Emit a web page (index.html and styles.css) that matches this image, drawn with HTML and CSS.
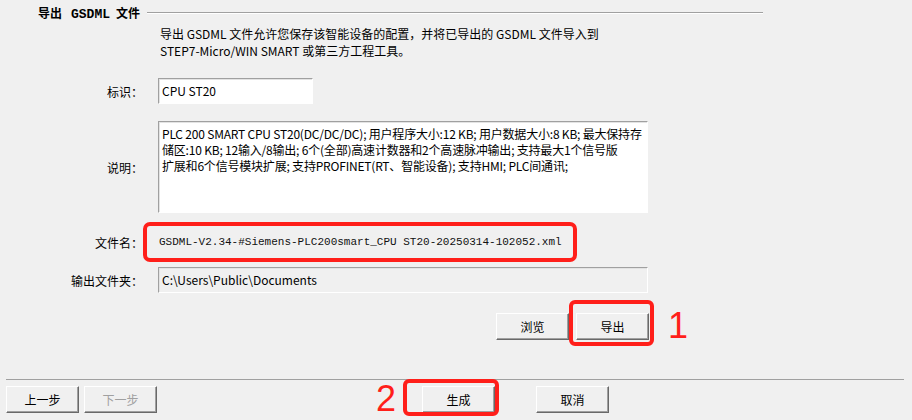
FILE: index.html
```html
<!DOCTYPE html>
<html lang="zh-CN">
<head>
    <meta charset="UTF-8">
    <title>导出 GSDML 文件</title>
    <link rel="stylesheet" href="styles.css">
</head>
<body>
    <div class="dialog">
        <div class="group-title">
            <span class="group-text">导出<b class="mono">GSDML</b>文件</span>
            <span class="group-line"></span>
        </div>
        <p class="intro">导出 GSDML 文件允许您保存该智能设备的配置，并将已导出的 GSDML 文件导入到<br>STEP7-Micro/WIN SMART 或第三方工程工具。</p>

        <div class="form">
            <label class="label row-id">标识：</label>
            <div class="field row-id"><div class="input id-input">CPU ST20</div></div>

            <label class="label row-desc">说明：</label>
            <div class="field row-desc"><div class="input textarea">PLC 200 SMART CPU ST20(DC/DC/DC); 用户程序大小:12 KB; 用户数据大小:8 KB; 最大保持存<br>储区:10 KB; 12输入/8输出; 6个(全部)高速计数器和2个高速脉冲输出; 支持最大1个信号版<br>扩展和6个信号模块扩展; 支持PROFINET(RT、智能设备); 支持HMI; PLC间通讯;</div></div>

            <label class="label row-file">文件名：</label>
            <div class="field row-file"><div class="file-name">GSDML-V2.34-#Siemens-PLC200smart_CPU ST20-20250314-102052.xml</div></div>

            <label class="label row-dir">输出文件夹：</label>
            <div class="field row-dir"><div class="input disabled">C:\Users\Public\Documents</div></div>
        </div>

        <div class="actions">
            <button class="btn">浏览</button>
            <span class="marked mark-export"><button class="btn">导出</button></span>
            <span class="step-no">1</span>
        </div>

        <div class="footer">
            <button class="btn">上一步</button>
            <button class="btn" disabled>下一步</button>
            <span class="marked mark-generate"><span class="step-no step-two">2</span><button class="btn">生成</button></span>
            <button class="btn btn-cancel">取消</button>
        </div>
    </div>
</body>
</html>
```

FILE: styles.css
```css
body {
    margin: 0;
    background: #f0f0f0;
    font-family: "Noto Sans CJK SC", "Liberation Sans", sans-serif;
    font-size: 12px;
    color: #000;
}
.dialog {
    width: 912px;
    height: 420px;
    overflow: hidden;
}
.group-title {
    display: flex;
    align-items: center;
    height: 25px;
    padding-left: 38px;
}
.group-text {
    font-weight: bold;
    font-size: 12px;
    margin-right: 7px;
}
.mono {
    font-family: "Liberation Mono", monospace;
    font-size: 13px;
    margin: 0 6px 0 9px;
}
.group-line {
    flex: none;
    width: 616px;
    border-top: 1px solid #a0a0a0;
    border-bottom: 1px solid #fff;
}
.intro {
    margin: 0 0 0 160px;
    line-height: 17px;
}
.form {
    display: grid;
    grid-template-columns: 143px 490px;
    column-gap: 15px;
    margin-top: 19px;
    align-items: center;
}
.label {
    text-align: right;
}
.input {
    box-sizing: border-box;
    border: 1px solid;
    border-color: #a0a0a0 #fff #fff #a0a0a0;
    box-shadow: inset 1px 1px 0 #e3e3e3;
    background: #fff;
    padding: 3px 3px;
    line-height: 17px;
}
.id-input {
    width: 155px;
    height: 26px;
}
.row-desc { margin-top: 17px; }
.textarea {
    height: 92px;
    line-height: 16px;
    padding-top: 4px;
    letter-spacing: -0.2px;
    white-space: nowrap;
    overflow: hidden;
}
.row-file { margin-top: 9px; }
.file-name {
    box-sizing: border-box;
    margin-left: -15px;
    width: 434px;
    height: 40px;
    border: 4px solid #ff1f1a;
    border-radius: 7px;
    padding-left: 12px;
    line-height: 32px;
    font-family: "Liberation Mono", monospace;
    font-size: 11px;
    color: #111;
}
.row-dir { margin-top: 5px; }
.disabled {
    height: 26px;
    background: #f0f0f0;
}
.actions {
    display: flex;
    align-items: center;
    margin: 18px 0 0 496px;
}
.btn {
    box-sizing: border-box;
    width: 73px;
    height: 27px;
    padding: 0;
    border: 1px solid;
    border-color: #fff #696969 #696969 #fff;
    box-shadow: inset -1px -1px 0 #a0a0a0;
    background: #f0f0f0;
    font-family: "Noto Sans CJK SC", sans-serif;
    font-size: 12px;
    color: #000;
}
.btn:disabled {
    color: #a0a0a0;
}
.marked {
    position: relative;
    display: inline-flex;
}
.marked::after {
    content: "";
    position: absolute;
    border: 4px solid #ff1f1a;
    border-radius: 6px;
}
.mark-export {
    margin-left: 7px;
}
.mark-export::after {
    left: -7px;
    right: -5px;
    top: -13px;
    bottom: -6px;
}
.step-no {
    font-family: "Liberation Sans", sans-serif;
    font-size: 36px;
    line-height: 30px;
    color: #ff1f1a;
    margin-left: 19px;
}
.footer {
    display: flex;
    align-items: center;
    margin: 38px 8px 0 6px;
    padding-top: 6px;
    border-top: 1px solid #a0a0a0;
}
.footer .btn + .btn {
    margin-left: 5px;
}
.mark-generate {
    margin-left: 265px;
}
.mark-generate::after {
    left: -19px;
    right: -4px;
    top: -7px;
    bottom: -3px;
}
.step-two {
    position: absolute;
    left: -46px;
    top: -2px;
    margin: 0;
}
.btn-cancel {
    margin-left: 41px;
}
```
